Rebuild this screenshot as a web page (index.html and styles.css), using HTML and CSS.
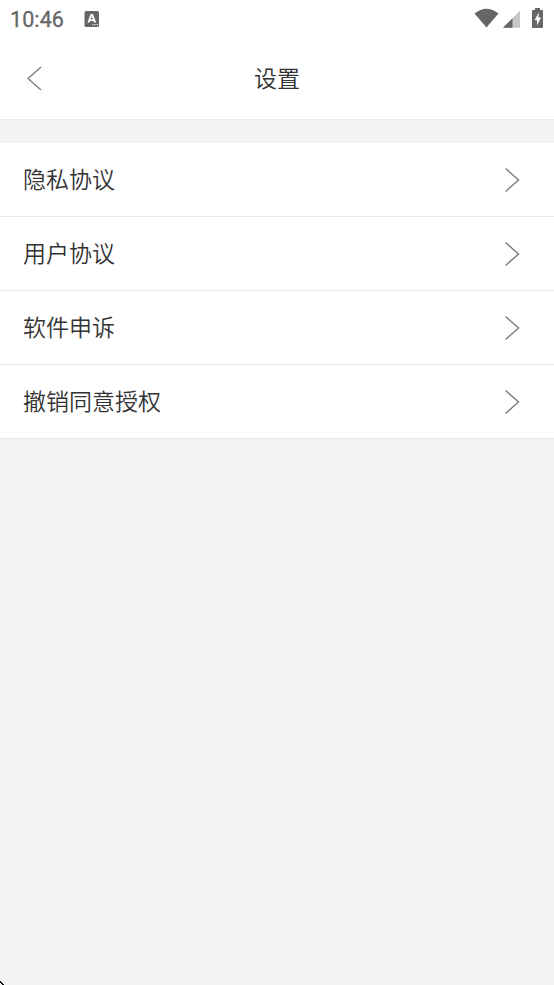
FILE: index.html
```html
<!DOCTYPE html>
<html lang="zh-CN">
<head>
<meta charset="utf-8">
<title>设置</title>
<link rel="stylesheet" href="styles.css">
</head>
<body>
<div class="status">
  <span class="time">10:46</span>
  <svg class="ime" width="16" height="18" viewBox="0 0 16 18"><rect x="0.5" y="1" width="14.500" height="16" rx="1.5" fill="#666"/><path fill-rule="evenodd" d="M6.600 4h2.300l3.300 8.500H10L9.400 11H6.100l-.6 1.500H3.400zM7.750 6.300 6.600 9.500h2.300z" fill="#fff"/><path d="M8 14.800h1.300M10.300 14.800h1.300M12.600 14.800h1.300" stroke="#fff" stroke-width="1.100"/></svg>
  <svg class="signals" width="72" height="24" viewBox="0 0 72 24"><path d="M0.500 6.500Q12.500-3 24.500 6.500L12.500 20.500Z" fill="#666"/><path d="M29 20.800 46 3.800V20.800Z" fill="#c6c6c6"/><path d="M29 20.800 38.500 11.300V20.800Z" fill="#666"/><path d="M61 1h5v2h2q1 0 1 1v16q0 1-1 1H59q-1 0-1-1V4q0-1 1-1h2z" fill="#666"/><path d="M64.800 5.500 60.500 13.300h2.500v5.200l4-8h-2.500z" fill="#fff"/></svg>
</div>
<header class="header">
  <svg class="back" width="16" height="26" viewBox="0 0 16 26"><path d="M14 2 1 13.500 14 25" fill="none" stroke="#808080" stroke-width="1.500"/></svg>
  <h1 class="title">设置</h1>
</header>
<main class="list">
  <div class="row"><span>隐私协议</span><svg class="chevron" width="16" height="26" viewBox="0 0 16 26"><path d="M1.500 1.500 14.500 13 1.500 24.500"/></svg></div>
  <div class="row"><span>用户协议</span><svg class="chevron" width="16" height="26" viewBox="0 0 16 26"><path d="M1.500 1.500 14.500 13 1.500 24.500"/></svg></div>
  <div class="row"><span>软件申诉</span><svg class="chevron" width="16" height="26" viewBox="0 0 16 26"><path d="M1.500 1.500 14.500 13 1.500 24.500"/></svg></div>
  <div class="row"><span>撤销同意授权</span><svg class="chevron" width="16" height="26" viewBox="0 0 16 26"><path d="M1.500 1.500 14.500 13 1.500 24.500"/></svg></div>
</main>
<svg class="corner" width="4" height="4" viewBox="0 0 4 4"><path d="M0 0h1v1h1v1h1v1h1v1H2V3H1V2H0z" fill="#111"/></svg>
</body>
</html>
```
FILE: styles.css
```css
* { box-sizing: border-box; }
body {
  margin: 0;
  height: 985px;
  overflow: hidden;
  position: relative;
  background: #f2f3f5;
  color: #333;
  font-family: "Noto Sans CJK SC", sans-serif;
  font-weight: 350;
}
.status {
  height: 38px;
  padding: 0 10px;
  display: flex;
  align-items: center;
  background: #fff;
}
.time {
  width: 74px;
  font: 400 21.5px/38px Roboto, sans-serif;
  color: #666;
  -webkit-text-stroke: 0.3px #666;
  letter-spacing: 0.1px;
  padding-top: 1px;
}
.ime { margin-bottom: 1px; }
.signals { margin-left: auto; margin-right: -2px; margin-bottom: 1px; }
.header {
  height: 82px;
  padding: 0 27px;
  display: grid;
  grid-template-columns: 16px 1fr 16px;
  align-items: center;
  background: #fff;
  border-bottom: 1px solid #ebebeb;
}
.back { margin-bottom: 1px; }
.title {
  margin: 0;
  padding-bottom: 4px;
  font-size: 23px;
  line-height: 34px;
  font-weight: 350;
  text-align: center;
}
.list { margin-top: 23px; }
.row {
  height: 74px;
  padding: 0 34px 0 23px;
  display: flex;
  align-items: center;
  justify-content: space-between;
  background: #fff;
  border-bottom: 1px solid #e9e9ea;
  font-size: 23px;
  line-height: 34px;
}
.row span { padding-bottom: 4px; }
.chevron path { fill: none; stroke: #808080; stroke-width: 1.500; }
.corner { position: absolute; left: 0; bottom: 0; }
```
